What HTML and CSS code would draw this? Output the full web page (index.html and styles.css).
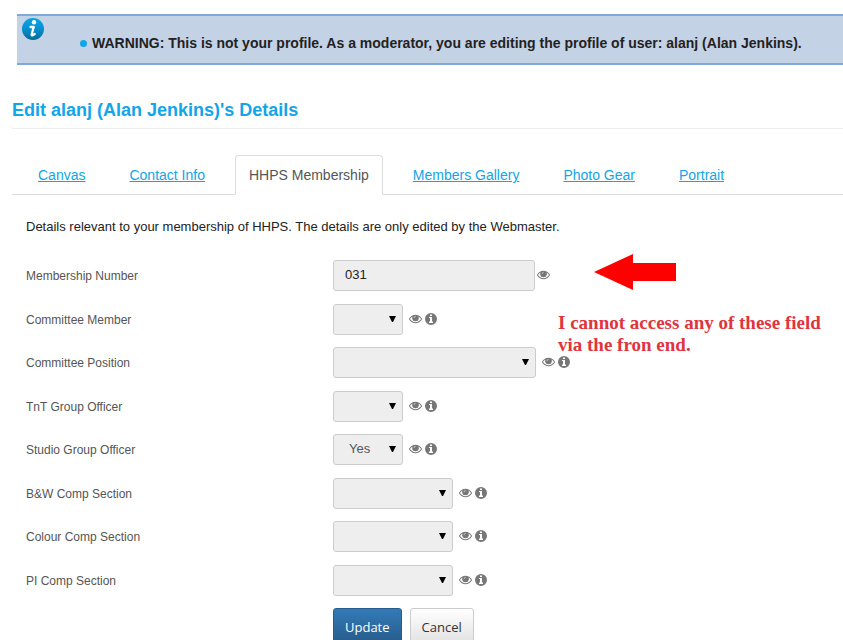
FILE: index.html
```
<!DOCTYPE html>
<html lang="en">
	<head>
		<meta charset="utf-8">
		<title>Edit Profile</title>
		<link rel="stylesheet" href="styles.css">
	</head>
	<body>
		<!-- Shared icons -->
		<svg class="sprite" aria-hidden="true">
			<symbol id="eye" viewBox="0 0 1792 1792">
				<path d="M1664 960q-152-236-381-353 61 104 61 225 0 185-131.500 316.500t-316.500 131.500-316.500-131.500-131.500-316.500q0-121 61-225-229 117-381 353 133 205 333.500 326.500t434.500 121.500 434.500-121.500 333.500-326.500zm-720-384q0-20-14-34t-34-14q-125 0-214.500 89.500t-89.500 214.500q0 20 14 34t34 14 34-14 14-34q0-86 61-147t147-61q20 0 34-14t14-34zm848 384q0 34-20 69-140 230-376.500 368.500t-499.500 138.500-499.500-139-376.500-368q-20-35-20-69t20-69q140-229 376.500-368t499.500-139 499.500 139 376.500 368q20 35 20 69z"/>
				<circle cx="896" cy="850" r="400"/>
				<path d="M700 800q20-170 200-190" fill="none" stroke="#fff" stroke-width="90"/>
			</symbol>
			<symbol id="info" viewBox="0 0 12 12">
				<path fill-rule="evenodd" d="M6 0a6 6 0 1 1 0 12A6 6 0 0 1 6 0zM5 1.500v1.500h2v-1.500zM4 4v1h1v3.500h-1v1.500h4v-1.500h-1v-4.500z"/>
			</symbol>
		</svg>

		<!-- Moderator warning -->
		<div class="warning">
			<svg class="warning-icon" viewBox="0 0 24 24" aria-hidden="true">
				<defs>
					<linearGradient id="ball" x1="0" y1="0" x2="0" y2="1">
						<stop offset="0" stop-color="#08a5e6"/>
						<stop offset="0.500" stop-color="#0590d0"/>
						<stop offset="1" stop-color="#056a94"/>
					</linearGradient>
				</defs>
				<circle cx="12" cy="12" r="11" fill="url(#ball)"/>
				<circle cx="13" cy="5.200" r="2.200" fill="#fff"/>
				<path d="M9.500 10h3.200l-2 7.200q-.3 1.500 1 1.100l2-1.300" fill="none" stroke="#fff" stroke-width="2.300" stroke-linejoin="round" stroke-linecap="round"/>
			</svg>
			<ul>
				<li>WARNING: This is not your profile. As a moderator, you are editing the profile of user: alanj (Alan Jenkins).</li>
			</ul>
		</div>

		<div class="profile">
			<h1>Edit alanj (Alan Jenkins)'s Details</h1>

			<nav class="tabs">
				<a href="#">Canvas</a>
				<a href="#">Contact Info</a>
				<a href="#" class="active">HHPS Membership</a>
				<a href="#">Members Gallery</a>
				<a href="#">Photo Gear</a>
				<a href="#">Portrait</a>
			</nav>

			<form class="panel">
				<p>Details relevant to your membership of HHPS. The details are only edited by the Webmaster.</p>
				<div class="row">
					<label for="number">Membership Number</label>
					<input type="text" id="number" value="031">
					<svg class="eye"><use href="#eye"/></svg>
				</div>
				<div class="row">
					<label for="member">Committee Member</label>
					<select id="member" class="small"><option></option><option>Yes</option></select>
					<svg class="eye"><use href="#eye"/></svg>
					<svg class="info"><use href="#info"/></svg>
				</div>
				<div class="row">
					<label for="position">Committee Position</label>
					<select id="position" class="large"><option></option></select>
					<svg class="eye"><use href="#eye"/></svg>
					<svg class="info"><use href="#info"/></svg>
				</div>
				<div class="row">
					<label for="tnt">TnT Group Officer</label>
					<select id="tnt" class="small"><option></option><option>Yes</option></select>
					<svg class="eye"><use href="#eye"/></svg>
					<svg class="info"><use href="#info"/></svg>
				</div>
				<div class="row">
					<label for="studio">Studio Group Officer</label>
					<select id="studio" class="small"><option>Yes</option></select>
					<svg class="eye"><use href="#eye"/></svg>
					<svg class="info"><use href="#info"/></svg>
				</div>
				<div class="row">
					<label for="bw">B&amp;W Comp Section</label>
					<select id="bw" class="medium"><option></option></select>
					<svg class="eye"><use href="#eye"/></svg>
					<svg class="info"><use href="#info"/></svg>
				</div>
				<div class="row">
					<label for="colour">Colour Comp Section</label>
					<select id="colour" class="medium"><option></option></select>
					<svg class="eye"><use href="#eye"/></svg>
					<svg class="info"><use href="#info"/></svg>
				</div>
				<div class="row">
					<label for="pi">PI Comp Section</label>
					<select id="pi" class="medium"><option></option></select>
					<svg class="eye"><use href="#eye"/></svg>
					<svg class="info"><use href="#info"/></svg>
				</div>
				<div class="buttons">
					<button type="submit" class="btn update">Update</button>
					<button type="button" class="btn">Cancel</button>
				</div>

				<!-- Note drawn over the form -->
				<div class="note">
					<svg class="arrow" viewBox="0 0 82 36" aria-hidden="true">
						<path d="M0 18L39 0v9h43v18H39v9z" fill="#f00"/>
					</svg>
					<div>I cannot access any of these field<br>via the fron end.</div>
				</div>
			</form>
		</div>
	</body>
</html>
```
FILE: styles.css
```
body {
	margin: 0;
	padding-top: 14px;
	background: #fff;
	color: #222;
	font-family: "Liberation Sans", Arial, sans-serif;
	font-size: 12px;
	overflow: hidden;
}
.sprite {
	display: none;
}
.warning {
	display: flex;
	align-items: flex-start;
	margin-left: 17px;
	height: 47px;
	background: #c4d2e6;
	border-top: 2px solid #84a7db;
	border-bottom: 2px solid #84a7db;
}
.warning-icon {
	flex: none;
	width: 24px;
	height: 24px;
	margin: 1px 0 0 4px;
}
.warning ul {
	margin: 17px 0 0 35px;
	padding: 0;
	list-style: none;
	font-size: 14px;
	font-weight: bold;
	line-height: 20px;
	white-space: nowrap;
}
.warning li {
	display: flex;
	align-items: center;
}
.warning li::before {
	content: "";
	width: 7px;
	height: 7px;
	margin-right: 5px;
	border-radius: 50%;
	background: #12a5e9;
}
.profile {
	margin-left: 12px;
}
h1 {
	margin: 34px 0 26px;
	padding-bottom: 7px;
	border-bottom: 1px solid #eee;
	color: #12a5e9;
	font-size: 18px;
	line-height: 22px;
}
.tabs {
	display: flex;
	gap: 16px;
	padding-left: 12px;
	border-bottom: 1px solid #ddd;
	font-size: 14px;
	line-height: 20px;
}
.tabs a {
	margin-bottom: -1px;
	padding: 9px 13px;
	border: 1px solid transparent;
	color: #12a5e9;
}
.tabs a.active {
	background: #fff;
	border-color: #ddd;
	border-bottom-color: #fff;
	border-radius: 4px 4px 0 0;
	color: #555;
	text-decoration: none;
}
.panel {
	position: relative;
	padding-left: 14px;
}
.panel p {
	margin: 22px 0 23px;
	font-size: 13px;
	line-height: 20px;
}
.row {
	display: flex;
	align-items: flex-start;
	height: 43px;
}
.row:nth-of-type(odd) {
	height: 44px;
}
.row label {
	flex: none;
	width: 307px;
	color: #555;
	line-height: 32px;
}
.row input,
.row select {
	box-sizing: border-box;
	height: 31px;
	padding: 0 15px 2px;
	border: 1px solid #ccc;
	border-radius: 3px;
	background-color: #eee;
	color: #555;
	font-family: inherit;
	font-size: 13px;
}
.row input {
	width: 202px;
	padding: 0 11px 2px;
	color: #222;
}
.row select {
	margin-right: 4px;
	appearance: none;
	background-image: url("data:image/svg+xml,%3Csvg xmlns='http://www.w3.org/2000/svg' width='7' height='7'%3E%3Cpath d='M0 0h7L4 6H3z'/%3E%3C/svg%3E");
	background-repeat: no-repeat;
	background-position: right 6px center;
}
.small {
	width: 70px;
}
.medium {
	width: 120px;
}
.large {
	width: 203px;
}
.row svg {
	fill: #777;
}
.eye {
	width: 13px;
	height: 13px;
	margin: 8px 0 0 2px;
}
.info {
	width: 12px;
	height: 12px;
	margin: 9px 0 0 3px;
}
.buttons {
	display: flex;
	gap: 8px;
	margin-left: 307px;
}
.btn {
	padding: 0 11px;
	height: 38px;
	border: 1px solid #ccc;
	border-radius: 3px;
	background: linear-gradient(#fff, #e0e0e0);
	color: #333;
	font-family: "Open Sans", sans-serif;
	font-size: 13px;
}
.update {
	border-color: #285a8b;
	background: linear-gradient(#337ab7, #265a88);
	color: #fff;
}
.note {
	position: absolute;
	top: 37px;
	left: 546px;
	color: #e0343f;
	font-family: "Liberation Serif", serif;
	font-size: 19px;
	font-weight: bold;
	line-height: 22px;
}
.arrow {
	display: block;
	width: 82px;
	height: 36px;
	margin: 0 0 22px 36px;
}
```
